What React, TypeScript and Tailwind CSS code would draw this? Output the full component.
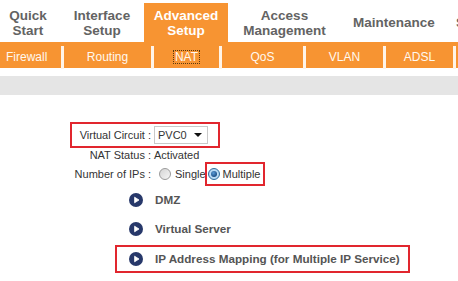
const ORANGE = 'bg-[#f79432]'

function SubSep() {
  return <div className="mt-[4px] h-[23px] w-[3px] shrink-0 bg-[#fff4e8]" />
}

function Radio({ checked }: { checked?: boolean }) {
  if (checked) {
    return (
      <span className="flex h-[12px] w-[12px] shrink-0 items-center justify-center rounded-full border border-[#2f6d9c] bg-[radial-gradient(circle,#d7ecfb_0%,#9fcbee_100%)]">
        <span className="block h-[6px] w-[6px] rounded-full bg-[radial-gradient(circle_at_40%_35%,#5a9bd6_0%,#1d4f86_70%)]" />
      </span>
    )
  }
  return (
    <span className="block h-[12px] w-[12px] shrink-0 rounded-full border border-[#9a9a9a] bg-[linear-gradient(135deg,#d4d4d4_0%,#f6f6f6_100%)]" />
  )
}

function Bullet() {
  return (
    <svg width="14" height="14" viewBox="0 0 14 14" className="shrink-0">
      <circle cx="7" cy="7" r="7" fill="#27386a" />
      <path d="M5.6 4.2 L10 7 L5.6 9.8 Z" fill="#ffffff" strokeLinejoin="round" stroke="#ffffff" strokeWidth="0.8" />
    </svg>
  )
}

export default function App() {
  return (
    <div className="h-[281px] w-[458px] overflow-hidden bg-white font-['Liberation_Sans',Arial,sans-serif]">
      {/* main tabs */}
      <div className="flex h-[42px] items-end overflow-hidden whitespace-nowrap text-[13.5px] font-bold leading-[15px] text-[#636363]">
        <div className="flex h-[42px] w-[56px] shrink-0 items-center justify-center pt-[3px] text-center">
          Quick<br />Start
        </div>
        <div className="ml-[4px] flex h-[42px] w-[84px] shrink-0 items-center justify-center pt-[3px] text-center">
          Interface<br />Setup
        </div>
        <div className={`flex h-[39px] w-[84px] shrink-0 items-center justify-center text-center text-white ${ORANGE}`}>
          Advanced<br />Setup
        </div>
        <div className="flex h-[42px] w-[113px] shrink-0 items-center justify-center pt-[3px] text-center">
          Access<br />Management
        </div>
        <div className="flex h-[42px] w-[106px] shrink-0 items-center justify-center pt-[3px] text-center">
          Maintenance
        </div>
        <div className="flex h-[42px] shrink-0 items-center pl-[9px] pt-[3px]">Status</div>
      </div>

      {/* sub tabs */}
      <div className={`flex h-[26px] whitespace-nowrap text-[12px] text-[#fff8ef] ${ORANGE}`}>
        <div className="flex w-[61px] shrink-0 items-center pl-[6px] pt-[3px]">Firewall</div>
        <SubSep />
        <div className="flex w-[87px] shrink-0 items-center justify-center pt-[3px]">Routing</div>
        <SubSep />
        <div className="flex w-[65px] shrink-0 items-center justify-center pt-[3px]">
          <span className="border border-dotted border-[#5a3a10] px-[1px] leading-[12px]">NAT</span>
        </div>
        <SubSep />
        <div className="flex w-[81px] shrink-0 items-center justify-center pt-[3px]">QoS</div>
        <SubSep />
        <div className="flex w-[77px] shrink-0 items-center justify-center pt-[3px]">VLAN</div>
        <SubSep />
        <div className="flex w-[67px] shrink-0 items-center justify-center pt-[3px]">ADSL</div>
        <SubSep />
      </div>

      <div className="mt-[8px] h-[19px] bg-[#e5e5e5]" />

      {/* NAT settings */}
      <div className="mt-[27px] text-[11px] text-[#333]">
        <div className="ml-[70px] flex h-[26px] w-[150px] items-center border-2 border-[#e1262e]">
          <span className="w-[79px] shrink-0 text-right">Virtual Circuit :</span>
          <div className="ml-[3px] flex h-[18px] w-[54px] items-center justify-between border border-[#c9c9c9] bg-white pl-[3px] pr-[5px]">
            <span>PVC0</span>
            <svg width="8" height="4" viewBox="0 0 8 4">
              <path d="M0 0 H8 L4 4 Z" fill="#111" />
            </svg>
          </div>
        </div>

        <div className="flex h-[14px] items-center">
          <span className="w-[151px] shrink-0 text-right">NAT Status :</span>
          <span className="ml-[3px]">Activated</span>
        </div>

        <div className="flex h-[24px] items-center">
          <span className="w-[151px] shrink-0 text-right">Number of IPs :</span>
          <span className="ml-[8px]">
            <Radio />
          </span>
          <span className="ml-[4px]">Single</span>
          <div className="ml-[-1px] flex h-[24px] items-center border-2 border-[#e1262e] pl-[1px] pr-[3px]">
            <Radio checked />
            <span className="ml-[3px]">Multiple</span>
          </div>
        </div>
      </div>

      {/* links */}
      <div className="whitespace-nowrap text-[11.7px] font-bold text-[#555]">
        <div className="flex h-[28px] items-center pl-[129px]">
          <Bullet />
          <span className="ml-[12px]">DMZ</span>
        </div>
        <div className="flex h-[30px] items-center pl-[129px]">
          <Bullet />
          <span className="ml-[12px]">Virtual Server</span>
        </div>
        <div className="ml-[115px] mt-[1px] flex h-[28px] w-[295px] items-center border-2 border-[#e1262e] pl-[12px]">
          <Bullet />
          <span className="ml-[12px]">IP Address Mapping (for Multiple IP Service)</span>
        </div>
      </div>
    </div>
  )
}
